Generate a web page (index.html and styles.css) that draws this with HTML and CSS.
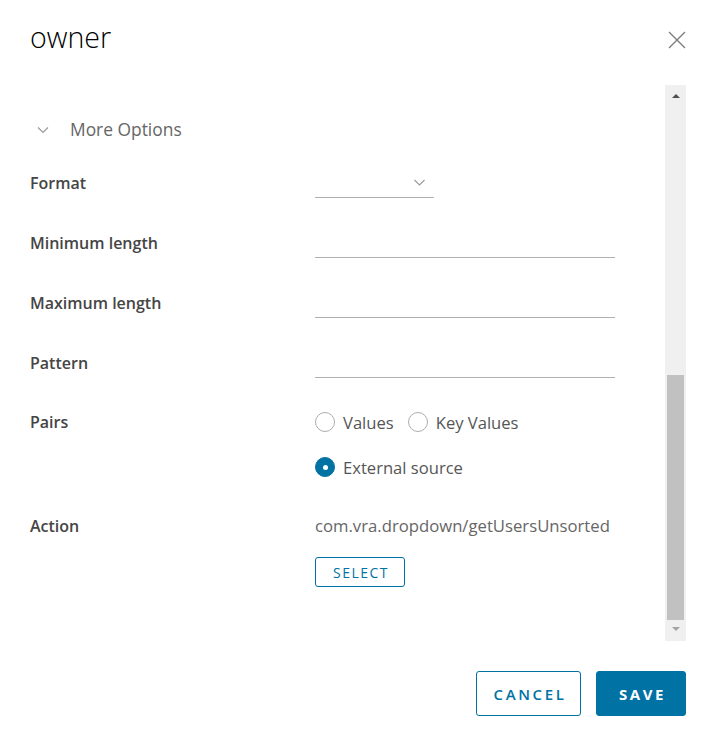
FILE: index.html
```html
<!DOCTYPE html>
<html>
<head>
<meta charset="utf-8">
<link rel="stylesheet" href="styles.css">
</head>
<body>
<div class="modal">
  <div class="header">
    <h1 class="title">owner</h1>
    <svg class="close" width="18" height="18" viewBox="0 0 18 18"><path d="M1 1 L17 17 M17 1 L1 17" stroke="#7a7a7a" stroke-width="1.3" fill="none"/></svg>
  </div>
  <div class="body">
    <div class="content">
      <div class="more">
        <svg class="more-chev" width="12" height="8" viewBox="0 0 12 8"><path d="M1 1.5 L6 6.5 L11 1.5" stroke="#9a9a9a" stroke-width="1.2" fill="none"/></svg>
        <span>More Options</span>
      </div>
      <div class="form">
        <div class="row">
          <div class="label">Format</div>
          <div class="select"><svg width="11" height="7" viewBox="0 0 11 7"><path d="M0.5 1 L5.5 6 L10.5 1" stroke="#9a9a9a" stroke-width="1.1" fill="none"/></svg></div>
        </div>
        <div class="row">
          <div class="label">Minimum length</div>
          <div class="input"></div>
        </div>
        <div class="row">
          <div class="label">Maximum length</div>
          <div class="input"></div>
        </div>
        <div class="row">
          <div class="label">Pattern</div>
          <div class="input"></div>
        </div>
        <div class="row top">
          <div class="label">Pairs</div>
          <div class="radios">
            <div class="radio-line">
              <label class="radio"><span class="dot"></span>Values</label>
              <label class="radio"><span class="dot"></span>Key Values</label>
            </div>
            <div class="radio-line">
              <label class="radio"><span class="dot on"></span>External source</label>
            </div>
          </div>
        </div>
        <div class="row top">
          <div class="label">Action</div>
          <div class="action">
            <div class="action-text">com.vra.dropdown/getUsersUnsorted</div>
            <button class="btn-sm">SELECT</button>
          </div>
        </div>
      </div>
    </div>
    <div class="scrollbar">
      <div class="arrow up"></div>
      <div class="track"><div class="thumb"></div></div>
      <div class="arrow down"></div>
    </div>
  </div>
  <div class="footer">
    <button class="btn outline">CANCEL</button>
    <button class="btn primary">SAVE</button>
  </div>
</div>
</body>
</html>
```
FILE: styles.css
```css
html, body {
  margin: 0;
  padding: 0;
  background: #fff;
}
body {
  font-family: "Open Sans", "Liberation Sans", sans-serif;
  width: 708px;
  height: 741px;
  overflow: hidden;
}
.modal {
  display: flex;
  flex-direction: column;
}
.header {
  display: flex;
  justify-content: space-between;
  align-items: flex-start;
  padding: 17px 22px 0 30px;
  height: 40px;
}
.title {
  margin: 0;
  font-size: 28.6px;
  font-weight: 300;
  line-height: 40px;
  color: #000;
}
.close {
  margin-top: 14px;
}
.body {
  display: flex;
  margin-top: 28px;
  height: 556px;
  padding-right: 22px;
}
.content {
  flex: 1;
  padding: 30px 0 0 30px;
}
.more {
  display: flex;
  align-items: center;
  height: 30px;
  color: #666;
  font-size: 17.4px;
  margin-top: -1px;
}
.more-chev {
  margin-left: 7px;
  margin-right: 21px;
  margin-top: 2px;
}
.form {
  margin-top: 23px;
  display: flex;
  flex-direction: column;
  gap: 29px;
}
.row {
  display: grid;
  grid-template-columns: 285px 1fr;
  align-items: center;
  min-height: 31px;
}
.row.top {
  align-items: start;
}
.label {
  font-size: 16px;
  font-weight: 600;
  color: #454545;
  line-height: 30px;
}
.input {
  width: 300px;
  height: 30px;
  border-bottom: 1px solid #b0b0b0;
}
.select {
  height: 30px;
  border-bottom: 1px solid #b0b0b0;
  display: flex;
  justify-content: flex-end;
  align-items: center;
  padding-right: 9px;
  box-sizing: content-box;
  width: 110px;
}
.radios {
  display: flex;
  flex-direction: column;
  gap: 15px;
}
.radio-line {
  display: flex;
  gap: 14px;
  height: 30px;
  align-items: center;
}
.radio {
  display: flex;
  align-items: center;
  font-size: 16.6px;
  color: #565656;
}
.dot {
  width: 18px;
  height: 18px;
  border: 1px solid #adadad;
  border-radius: 50%;
  margin-right: 8px;
  box-sizing: content-box;
  position: relative;
}
.dot.on {
  background: #0072a3;
  border-color: #0072a3;
}
.dot.on::after {
  content: "";
  position: absolute;
  left: 6.5px;
  top: 6.5px;
  width: 5px;
  height: 5px;
  border-radius: 50%;
  background: #fff;
}
.action {
  display: flex;
  flex-direction: column;
  align-items: flex-start;
}
.action-text {
  font-size: 16.7px;
  color: #666;
  line-height: 30px;
}
.btn-sm {
  margin-top: 16px;
  width: 90px;
  height: 30px;
  border: 1px solid #0072a3;
  border-radius: 3px;
  background: #fff;
  color: #0072a3;
  font-family: "Open Sans", "Liberation Sans", sans-serif;
  font-size: 14px;
  letter-spacing: 1.5px;
  padding: 0 0 0 2px;
}
.scrollbar {
  width: 21px;
  background: #f0f0f0;
  display: flex;
  flex-direction: column;
  align-items: center;
}
.arrow {
  width: 0;
  height: 0;
  border-left: 4px solid transparent;
  border-right: 4px solid transparent;
}
.arrow.up {
  border-bottom: 4px solid #505050;
  margin: 9px 0 0;
}
.track {
  flex: 1;
  width: 17px;
  display: flex;
  flex-direction: column;
  justify-content: flex-end;
  padding-bottom: 2px;
}
.thumb {
  height: 245px;
  background: #c1c1c1;
}
.arrow.down {
  border-top: 4px solid #a3a3a3;
  margin: 5px 0 10px;
}
.footer {
  display: flex;
  justify-content: flex-end;
  gap: 15px;
  padding: 30px 22px 0 0;
}
.btn {
  height: 45px;
  border-radius: 3px;
  font-family: "Open Sans", "Liberation Sans", sans-serif;
  font-size: 15px;
  letter-spacing: 2.6px;
  padding: 0 0 0 3px;
}
.btn.outline {
  width: 105px;
  border: 1px solid #0072a3;
  background: #fff;
  color: #0072a3;
  font-weight: 600;
}
.btn.primary {
  width: 90px;
  border: 1px solid #0072a3;
  background: #0072a3;
  color: #fff;
  font-weight: 700;
}
```
